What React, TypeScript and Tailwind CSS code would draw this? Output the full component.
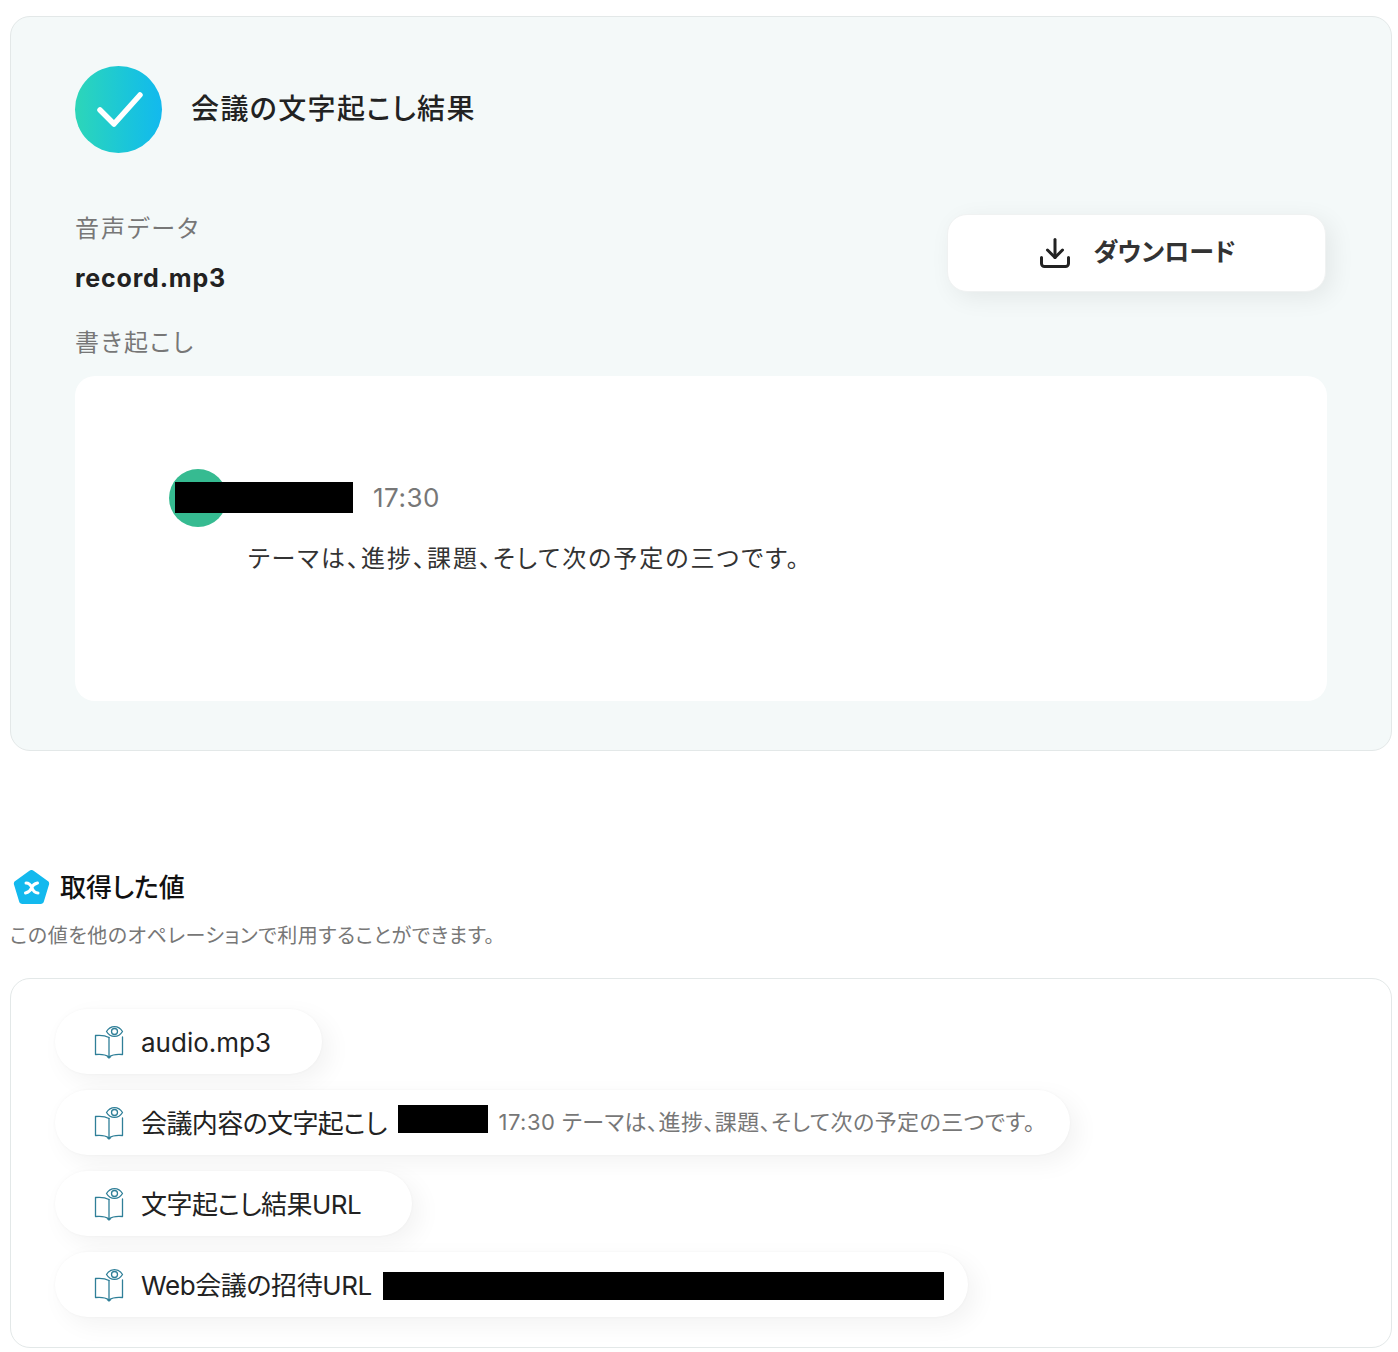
import { Download } from "lucide-react";

const FONT = "[font-family:Inter,'Noto_Sans_CJK_JP',sans-serif] [font-feature-settings:'palt']";

function BookEye() {
  return (
    <svg width="30" height="34" viewBox="0 0 30 34" fill="none" stroke="#2f7f98" strokeWidth="1.3" strokeLinejoin="round" strokeLinecap="round">
      <path d="M15 12.5 C12 10.8 6.5 10 1.5 10.5 V29.5 C6.5 29 12 29.8 15 31.8 C18 29.8 23.5 29 28.5 29.5 V12" />
      <path d="M15 12.5 V31.8" />
      <path d="M13.5 31.8 L15 33 L16.5 31.8" />
      <path d="M12.5 6.5 C14.5 3.2 17.5 1.6 20.5 1.6 C23.5 1.6 26.5 3.2 28.5 6.5 C26.5 9.8 23.5 11.4 20.5 11.4 C17.5 11.4 14.5 9.8 12.5 6.5 Z" fill="#fff" />
      <circle cx="20.5" cy="6.5" r="3" />
    </svg>
  );
}

function ValuePill({ label, labelClass, children }: { label: string; labelClass: string; children?: React.ReactNode }) {
  return (
    <div className="flex h-[65px] w-fit items-center rounded-full bg-white pl-[39px] pr-[24px] shadow-[8px_8px_24px_rgba(0,0,0,0.05),0_0_3px_rgba(0,0,0,0.04)]">
      <BookEye />
      <span className={`ml-[17px] whitespace-nowrap pt-[2px] text-[26px] text-[#222] ${labelClass}`}>{label}</span>
      {children}
    </div>
  );
}

export default function App() {
  return (
    <div className={`${FONT} h-[1352px] w-[1398px] overflow-hidden bg-white px-[10px] pt-[16px]`}>
      {/* Result card */}
      <section className="h-[735px] w-[1382px] rounded-[20px] border border-[#e3e8e8] bg-[#f4f9f9] px-[64px] pt-[49px]">
        <div className="flex items-center gap-[29px]">
          <div className="flex h-[87px] w-[87px] items-center justify-center rounded-full bg-gradient-to-r from-[#2dd6b8] to-[#13b9ee]">
            <svg className="ml-[3px]" width="48" height="38" viewBox="0 0 48 38" fill="none" stroke="#fff" strokeWidth="5.5" strokeLinecap="round" strokeLinejoin="round">
              <path d="M4 19 L18 33 L44 4" />
            </svg>
          </div>
          <h1 className="pb-[2px] text-[28px] font-medium tracking-[1.4px] text-[#222]">会議の文字起こし結果</h1>
        </div>

        <div className="mt-[56px] flex items-start justify-between">
          <div>
            <p className="text-[24px] leading-[40px] tracking-[2px] text-[#777]">音声データ</p>
            <p className="mt-[9px] text-[25px] font-bold leading-[40px] tracking-[0.8px] text-[#222]">record.mp3</p>
          </div>
          <button className="mr-[1px] mt-[5px] flex h-[78px] w-[379px] items-center justify-center gap-[20px] rounded-[20px] border border-[#f0f2f2] bg-white text-[25px] font-semibold text-[#333] shadow-[6px_6px_24px_rgba(0,0,0,0.07)]">
            <Download size={36} strokeWidth={2} color="#222" />
            ダウンロード
          </button>
        </div>

        <p className="mt-[25px] text-[24px] leading-[40px] tracking-[2px] text-[#777]">書き起こし</p>

        <div className="mt-[13px] h-[325px] w-[1252px] rounded-[20px] bg-white pl-[94px] pt-[93px]">
          <div className="flex items-center">
            <div className="relative h-[58px] w-[58px] rounded-full bg-[#36bb91]">
              <div className="absolute left-[6px] top-[13px] h-[31px] w-[178px] bg-black" />
            </div>
            <span className="ml-[146px] pb-[2px] text-[26px] tracking-[0.5px] text-[#777]">17:30</span>
          </div>
          <p className="ml-[79px] mt-[12px] text-[24px] leading-[40px] tracking-[2px] text-[#333]">テーマは、進捗、課題、そして次の予定の三つです。</p>
        </div>
      </section>

      {/* Acquired values */}
      <div className="mt-[118px] flex items-center gap-[10px] pl-[3px]">
        <svg width="37" height="36" viewBox="0 0 37 36">
          <path d="M17 1.5 Q18.5 0.5 20 1.5 L34.5 12 Q35.5 13 35 14.5 L30 31 Q29.5 33 27.5 33 H9.5 Q7.5 33 7 31 L2 14.5 Q1.5 13 2.5 12 Z" fill="#13b9ee" stroke="#13b9ee" strokeWidth="2" strokeLinejoin="round" />
          <path d="M13 13 Q17 13 19 18 Q21 23 25 23 M24.5 13 Q20 14 18.5 18 Q17 22 12.5 23" fill="none" stroke="#fff" strokeWidth="3" strokeLinecap="round" />
        </svg>
        <h2 className="text-[26px] font-medium leading-[38px] text-[#111]">取得した値</h2>
      </div>
      <p className="mt-[14px] text-[20px] leading-[30px] tracking-[0.55px] text-[#777]">この値を他のオペレーションで利用することができます。</p>

      <section className="mt-[27px] flex h-[370px] w-[1382px] flex-col gap-[16px] rounded-[20px] border border-[#e3e8e8] bg-white pl-[44px] pt-[30px]">
        <ValuePill label="audio.mp3" labelClass="tracking-normal">
          <span className="w-[27px]" />
        </ValuePill>
        <ValuePill label="会議内容の文字起こし" labelClass="tracking-[-0.6px]">
          <span className="relative ml-[11px] whitespace-nowrap pl-[101px] text-[22px] tracking-[0.45px] text-[#777]">
            <span className="absolute left-0 top-[-1px] h-[28px] w-[90px] bg-black" />
            17:30 テーマは、進捗、課題、そして次の予定の三つです。
          </span>
          <span className="w-[11px]" />
        </ValuePill>
        <ValuePill label="文字起こし結果URL" labelClass="tracking-[-0.5px]">
          <span className="w-[27px]" />
        </ValuePill>
        <ValuePill label="Web会議の招待URL" labelClass="tracking-[-0.4px]">
          <span className="ml-[11px] mt-[3px] h-[28px] w-[561px] bg-black" />
        </ValuePill>
      </section>
    </div>
  );
}
